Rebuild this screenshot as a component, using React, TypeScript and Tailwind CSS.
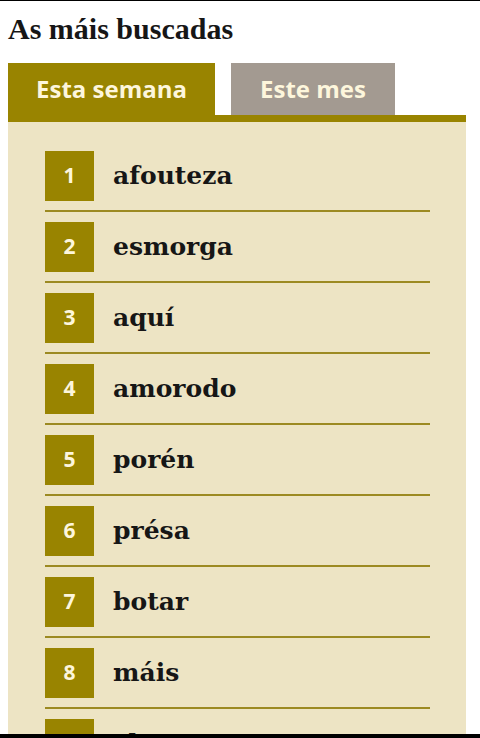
import React from "react";

const words = ["afouteza", "esmorga", "aquí", "amorodo", "porén", "présa", "botar", "máis", "chorar", "velaquí"];

export default function App() {
  return (
    <div className="h-[738px] w-[480px] overflow-hidden bg-white border-t border-b-4 border-black">
      <div className="pl-2">
        <h2
          className="pt-[12px] h-[62px] text-[30px] font-bold text-[#161616] leading-[32px]"
          style={{ fontFamily: '"Liberation Serif", serif' }}
        >
          As máis buscadas
        </h2>
        <div className="flex items-end gap-4" style={{ fontFamily: '"Open Sans", sans-serif' }}>
          <div className="w-[207px] h-[52px] bg-[#998400] flex items-center justify-center text-[24px] font-bold text-[#fdf6dc]">
            Esta semana
          </div>
          <div className="w-[164px] h-[52px] bg-[#a39a91] flex items-center justify-center text-[24px] font-bold text-[#fdf6dc]">
            Este mes
          </div>
        </div>
        <div className="w-[458px] h-[7px] bg-[#998400]" />
        <div className="w-[458px] bg-[#ede4c4] pl-[37px] pt-[29px] pb-10">
          {words.map((w, i) => (
            <div key={w} className="w-[385px]">
              <div className="flex items-center gap-[19px]">
                <div
                  className="w-[49px] h-[50px] bg-[#998400] flex items-center justify-center text-[21px] font-bold text-[#fdf6dc]"
                  style={{ fontFamily: '"Open Sans", sans-serif' }}
                >
                  {i + 1}
                </div>
                <div
                  className="text-[25px] font-bold text-[#161616] leading-[30px]"
                  style={{ fontFamily: '"DejaVu Serif", serif' }}
                >
                  {w}
                </div>
              </div>
              <div className="mt-[9px] mb-[10px] h-[2px] bg-[#9c8a22]" />
            </div>
          ))}
        </div>
      </div>
    </div>
  );
}
